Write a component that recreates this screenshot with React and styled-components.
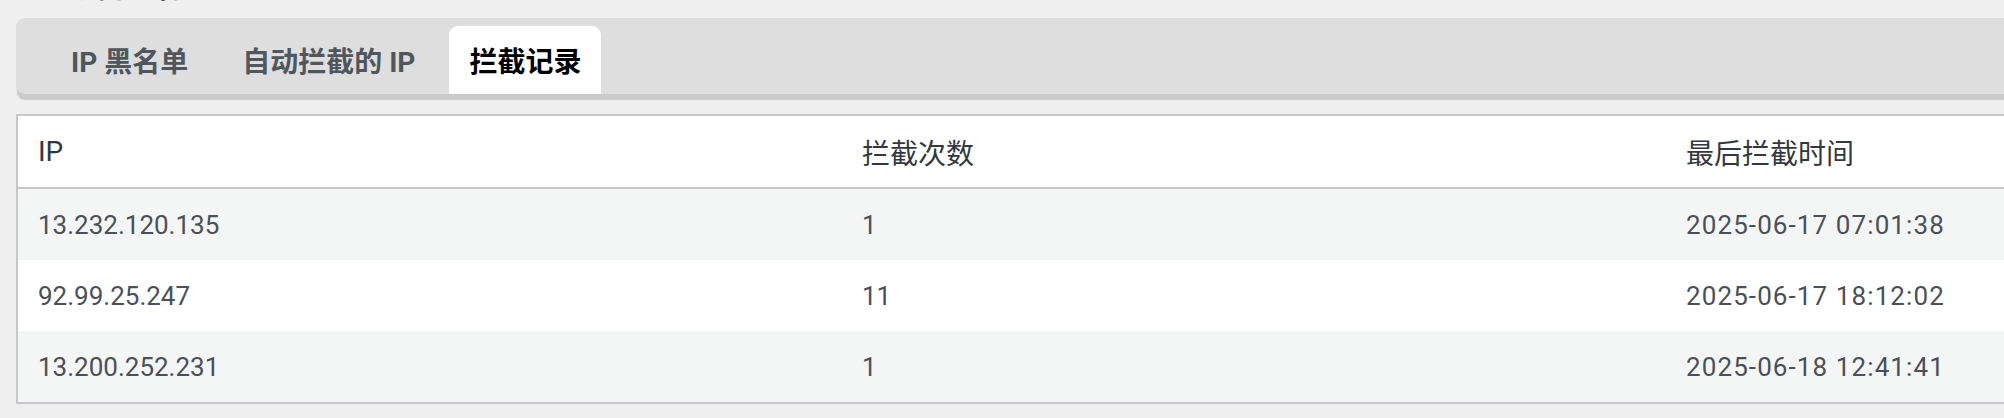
import React, { useState } from "react";
import styled, { createGlobalStyle } from "styled-components";

const GlobalStyle = createGlobalStyle`
  html, body {
    margin: 0;
    padding: 0;
    background: #efefef;
    overflow: hidden;
  }
  body {
    font-family: Roboto, "Noto Sans CJK SC", sans-serif;
  }
`;

const Page = styled.div`
  width: 2476px;
  padding-left: 16px;
`;

const Heading = styled.h2`
  margin: -25px 0 0 54px;
  height: 28px;
  font-size: 28px;
  line-height: 28px;
  font-weight: 600;
  color: #555;
`;

const TabBar = styled.div`
  display: flex;
  align-items: flex-end;
  gap: 14px;
  height: 68px;
  margin-top: 15px;
  padding: 8px 0 0 35px;
  background: #dedede;
  border-radius: 9px;
  box-shadow: 0 7px 1px -1px #cacaca;
`;

const Tab = styled.button`
  height: 68px;
  padding: 0 20px;
  border: none;
  border-radius: 9px 9px 0 0;
  background: ${(p) => (p.$active ? "#fff" : "transparent")};
  color: ${(p) => (p.$active ? "#000" : "#50565d")};
  font-family: Roboto, "Noto Sans CJK SC", sans-serif;
  font-size: 28px;
  font-weight: 700;
  cursor: pointer;
`;

const Table = styled.div`
  display: grid;
  grid-template-columns: repeat(3, 824px);
  margin-top: 20px;
  border: 2px solid #c6c6cb;
  border-right: none;
`;

const HeadCell = styled.div`
  display: flex;
  align-items: center;
  height: 71px;
  padding-left: 20px;
  background: #fff;
  border-bottom: 2px solid #c6c6cb;
  color: #33383e;
  font-size: 28px;
`;

const Cell = styled.div`
  display: flex;
  align-items: center;
  height: 71px;
  padding-left: 20px;
  background: ${(p) => (p.$odd ? "#f4f6f6" : "#fff")};
  color: #4a5058;
  font-size: 26px;
  letter-spacing: ${(p) => (p.$wide ? "1.1px" : "0")};
`;

const tabs = ["IP 黑名单", "自动拦截的 IP", "拦截记录"];

const records = [
  { ip: "13.232.120.135", count: 1, last: "2025-06-17 07:01:38" },
  { ip: "92.99.25.247", count: 11, last: "2025-06-17 18:12:02" },
  { ip: "13.200.252.231", count: 1, last: "2025-06-18 12:41:41" },
];

const App = () => {
  const [active, setActive] = useState(2);
  return (
    <Page>
      <GlobalStyle />
      <Heading>访问控制</Heading>
      <TabBar>
        {tabs.map((t, i) => (
          <Tab key={t} $active={i === active} onClick={() => setActive(i)}>
            {t}
          </Tab>
        ))}
      </TabBar>
      <Table>
        <HeadCell>IP</HeadCell>
        <HeadCell>拦截次数</HeadCell>
        <HeadCell>最后拦截时间</HeadCell>
        {records.map((r, idx) => (
          <React.Fragment key={r.ip}>
            <Cell $odd={idx % 2 === 0}>{r.ip}</Cell>
            <Cell $odd={idx % 2 === 0}>{r.count}</Cell>
            <Cell $odd={idx % 2 === 0} $wide>
              {r.last}
            </Cell>
          </React.Fragment>
        ))}
      </Table>
    </Page>
  );
};

export default App;
